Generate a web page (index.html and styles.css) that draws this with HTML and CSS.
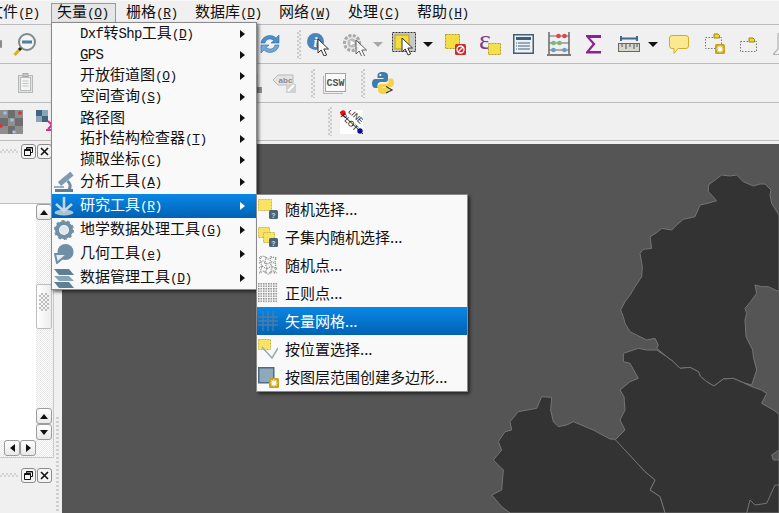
FILE: index.html
```html
<!DOCTYPE html>
<html lang="zh">
<head>
<meta charset="utf-8">
<title>QGIS</title>
<link rel="stylesheet" href="styles.css">
</head>
<body>
<svg class="defs" width="0" height="0">
  <defs>
    <path id="cur" d="M0 0V14L3.200 11 6 17 8.600 16 5.800 10H10.500Z" fill="#fff" stroke="#333" stroke-width="1"/>
    <g id="badge-q"><rect width="9" height="9" rx="1.500" fill="#4a6478"/><text x="4.500" y="7.500" class="badge-t">?</text></g>
    <g id="badge-g"><rect width="10" height="10" rx="1.500" fill="#c9a514"/><path d="M5 1.500V8.500M1.500 5H8.500M2.500 2.500 7.500 7.500M7.500 2.500 2.500 7.500" stroke="#fff" stroke-width="1.200"/></g>
  </defs>
</svg>

<header class="menubar">
  <div class="mi"><span>文件<span class="lat">(<u>P</u>)</span></span></div>
  <div class="mi active"><span>矢量<span class="lat">(<u>O</u>)</span></span></div>
  <div class="mi"><span>栅格<span class="lat">(<u>R</u>)</span></span></div>
  <div class="mi"><span>数据库<span class="lat">(<u>D</u>)</span></span></div>
  <div class="mi"><span>网络<span class="lat">(<u>W</u>)</span></span></div>
  <div class="mi"><span>处理<span class="lat">(<u>C</u>)</span></span></div>
  <div class="mi"><span>帮助<span class="lat">(<u>H</u>)</span></span></div>
</header>

<div class="toolbar">
  <svg width="2" height="8" viewBox="0 0 2 8"><rect width="2" height="8" rx="1" fill="#8a8a8a"/></svg>
  <svg class="ml11" width="23" height="23" viewBox="0 0 23 23"><circle cx="14" cy="9" r="8" fill="#f4f6f6" stroke="#7c8a8c" stroke-width="2"/><rect x="9" y="7.500" width="10" height="3" fill="#4f7da3"/><path d="M8 15 1.500 22" stroke="#d9ae22" stroke-width="3"/><path d="M8 15 6 17" stroke="#222" stroke-width="3"/></svg>
  <svg class="ml223" width="22" height="22" viewBox="0 0 22 22"><path d="M2 10C3 3 12 0 17 5L20 2V10H12L15 7.500C11 4.500 7 6 6 10Z" fill="#4b8fce" stroke="#2d6ca8" stroke-width=".6"/><path d="M20 12C19 19 10 22 5 17L2 20V12H10L7 14.500C11 17.500 15 16 16 12Z" fill="#6fa9dc" stroke="#2d6ca8" stroke-width=".6"/></svg>
  <div class="grip ml16"></div>
  <svg class="ml6" width="24" height="23" viewBox="0 0 24 23"><circle cx="8.500" cy="8.500" r="8.500" fill="#4a84bd"/><text x="8.500" y="13.500" class="info">i</text><use href="#cur" x="11" y="6"/></svg>
  <svg class="ml11" width="25" height="23" viewBox="0 0 25 23"><circle cx="10" cy="10" r="7.500" fill="#e8e8e8" stroke="#a8a8a8" stroke-width="3" stroke-dasharray="3 1.500"/><circle cx="10" cy="10" r="4.500" fill="#bcbcbc"/><path d="M8.500 7.500 13 10 8.500 12.500Z" fill="#fff"/><use href="#cur" x="14" y="7" opacity=".75"/></svg>
  <svg class="ml6" width="10" height="5" viewBox="0 0 10 5"><path d="M0 0H10L5 5Z" fill="#a8a8a8"/></svg>
  <svg class="ml9" width="25" height="24" viewBox="0 0 25 24"><rect x=".500" y=".500" width="23" height="19" fill="#c9c9c9" stroke="#333" stroke-dasharray="2 1"/><rect x="3" y="3" width="14" height="14" fill="#f2dc3e" stroke="#b59f20"/><use href="#cur" x="10" y="6"/></svg>
  <svg class="ml6" width="10" height="5" viewBox="0 0 10 5"><path d="M0 0H10L5 5Z" fill="#111"/></svg>
  <svg class="ml12" width="22" height="21" viewBox="0 0 22 21"><rect x=".500" y=".500" width="14" height="14" fill="#f4dc45" stroke="#b39a20" stroke-dasharray="2 1"/><rect x="10" y="10" width="11" height="11" rx="1.500" fill="#cf2b2b"/><circle cx="15.500" cy="15.500" r="3.500" fill="none" stroke="#fff" stroke-width="1.300"/><path d="M13 18 18 13" stroke="#fff" stroke-width="1.300"/></svg>
  <svg class="ml13" width="21" height="21" viewBox="0 0 21 21"><text x="-1" y="15" class="eps">ε</text><rect x="8.500" y="9.500" width="12" height="11" fill="#f4e04a" stroke="#b59f20" stroke-dasharray="2 1"/></svg>
  <svg class="ml12" width="21" height="20" viewBox="0 0 21 20"><rect x=".750" y=".750" width="19.500" height="18.500" fill="#eef2f5" stroke="#3c607c" stroke-width="1.500"/><rect x="3" y="3" width="15" height="3" fill="#3c607c"/><path d="M5 9H17M5 12H17M5 15H17" stroke="#3c607c" stroke-width="1.200"/><path d="M3 9H4M3 12H4M3 15H4" stroke="#3c607c" stroke-width="1.200"/></svg>
  <svg class="ml13" width="24" height="24" viewBox="0 0 24 24"><path d="M2 0V22M22 0V22M0 23H24" stroke="#555" stroke-width="1.300"/><path d="M2 4H22M2 11H22M2 18H22" stroke="#666"/><circle cx="11.500" cy="4" r="2.300" fill="#d8474d"/><circle cx="17.500" cy="4" r="2.300" fill="#d8474d"/><circle cx="6.500" cy="11" r="2.300" fill="#79b97a"/><circle cx="12.500" cy="11" r="2.300" fill="#79b97a"/><circle cx="6.500" cy="18" r="2.300" fill="#6f9cc4"/><circle cx="17.500" cy="18" r="2.300" fill="#6f9cc4"/></svg>
  <svg class="ml14" width="17" height="20" viewBox="0 0 17 20"><path d="M1 1H16V4H5L10.500 10 4.500 17H16V19.500H1V18L7.500 10 1 2.500Z" fill="#8e1f94"/></svg>
  <svg class="ml16" width="22" height="16" viewBox="0 0 22 16"><path d="M3 0V5M19 0V5M3 2.500H19" stroke="#3f6a8a" stroke-width="2"/><rect x=".500" y="7.500" width="21" height="8" fill="#d8d8cc" stroke="#666"/><path d="M4 8V11M8 8V13M12 8V11M16 8V13M19 8V11" stroke="#555"/></svg>
  <svg class="ml8" width="10" height="5" viewBox="0 0 10 5"><path d="M0 0H10L5 5Z" fill="#111"/></svg>
  <svg class="ml11" width="20" height="19" viewBox="0 0 20 19"><path d="M3 .500H17Q19.500 .500 19.500 3V11Q19.500 13.500 17 13.500H9L5 18.500V13.500H3Q.500 13.500 .500 11V3Q.500 .500 3 .500Z" fill="#fbe98f" stroke="#cfae2c"/></svg>
  <svg class="ml16" width="21" height="22" viewBox="0 0 21 22"><rect x=".500" y="4.500" width="16" height="11" fill="none" stroke="#777" stroke-dasharray="1.500 1.500"/><path d="M9 5V1H13L14.500 2.500V5Z" fill="#f1d52a" stroke="#9c8510"/><use href="#badge-g" x="10" y="11"/></svg>
  <svg class="ml14" width="17" height="15" viewBox="0 0 17 15"><rect x=".500" y="4.500" width="16" height="10" fill="none" stroke="#777" stroke-dasharray="1.500 1.500"/><path d="M9 5V1H13L14.500 2.500V5Z" fill="#f1d52a" stroke="#9c8510"/></svg>
  <svg class="ml16" width="12" height="22" viewBox="0 0 12 22"><path d="M5 .500H12M5 .500V16L0 21.500H12" fill="none" stroke="#b4b4b4" stroke-width="1.200"/></svg>
</div>

<div class="toolbar">
  <svg class="ml18" width="15" height="20" viewBox="0 0 15 20"><rect x=".500" y="2.500" width="14" height="17" fill="#dfe2e2" stroke="#b5b8b8"/><rect x="2.500" y="4.500" width="10" height="13" fill="#f4f4f4" stroke="#bbb"/><rect x="5" y=".500" width="5" height="3" fill="#c4c6c6" stroke="#aaa"/><path d="M4.500 8H10.500M4.500 10.500H10.500M4.500 13H10.500" stroke="#c4c4c4"/></svg>
  <svg class="ml222" width="7" height="19" viewBox="0 0 7 19"><rect y="13" width="7" height="6" fill="#8e8e8e"/><path d="M0 0H3V13H0Z" fill="#d8d8d8"/></svg>
  <svg class="ml11" width="24" height="19" viewBox="0 0 24 19"><path d="M5 1H20V11H5L0 6Z" fill="#e4e4e4" stroke="#b8b8b8"/><text x="12.500" y="9" class="abc">abc</text><rect x="13" y="10" width="10" height="9" fill="#d2d2d2"/><path d="M15 17 21 11" stroke="#fff" stroke-width="2"/></svg>
  <div class="grip ml14"></div>
  <svg class="ml8" width="23" height="21" viewBox="0 0 23 21"><path d="M.500 3V20.500H20" fill="none" stroke="#b8b8b8"/><rect x="2.500" y=".500" width="20" height="18" fill="#fafafa" stroke="#a4a4a4"/><text x="12.500" y="13" class="csw">CSW</text></svg>
  <div class="grip ml15"></div>
  <svg class="ml7" width="22" height="22" viewBox="0 0 22 22"><path d="M11 0C6 0 5.500 2 5.500 3.500V6H11.500V7H3.500C1 7 0 9 0 11.500S1 16 3.500 16H5.500V13C5.500 11.500 7 10 8.500 10H13.500C15 10 16 9 16 7.500V3.500C16 1.500 14 0 11 0Z" fill="#3f7cae"/><path d="M16.500 6.500V9.500C16.500 11 15 12 13.500 12H8.500C7 12 6 13 6 14.500V18.500C6 20.500 8 22 11 22S16.500 20.500 16.500 18.500V16H10.500V15H18.500C21 15 22 13 22 10.500S21 6.500 18.500 6.500Z" fill="#f4d34a"/><circle cx="8.300" cy="3" r="1.100" fill="#fff"/><path d="M14 14.500 20 18 14 21" fill="none" stroke="#333" stroke-width="1.200"/></svg>
</div>

<div class="toolbar toolbar-last">
  <svg width="23" height="24" viewBox="0 0 23 24"><rect width="23" height="24" fill="#8e8e8e"/><path d="M0 8H8V16H0ZM8 0H15V8H8ZM15 8H23V16H15ZM8 16H15V24H8Z" fill="#6e6e6e"/><circle cx="5" cy="3" r="1.800" fill="#9ec1e8"/><circle cx="20" cy="3" r="1.800" fill="#d93030"/><circle cx="12" cy="10" r="1.800" fill="#9ec1e8"/><circle cx="1" cy="16" r="1.800" fill="#d93030"/><circle cx="14" cy="22" r="1.800" fill="#9ec1e8"/></svg>
  <svg class="ml13" width="16" height="23" viewBox="0 0 16 23"><path d="M0 0H6V6H0ZM6 6H12V12H6Z" fill="#3f6480"/><path d="M6 0H12V6H6ZM0 6H6V12H0Z" fill="#8aa5ba"/><path d="M12 11 16 15 12 19M16 20H10" fill="none" stroke="#d1338b" stroke-width="2"/></svg>
  <div class="grip ml280"></div>
  <svg class="ml8" width="23" height="24" viewBox="0 0 23 24"><rect width="23" height="24" fill="#fff"/><path d="M0 2 23 24" stroke="#222"/><circle cx="3" cy="3" r="2.700" fill="#ee0d0d"/><circle cx="20" cy="21" r="2.700" fill="#0a0a8c"/><text transform="translate(14 8) rotate(45)" class="lp">LINE</text><text transform="translate(7.500 14) rotate(45)" class="lp">PLOT</text></svg>
</div>
<div class="toolbar-gap"></div>

<main class="main">
  <aside class="dock">
    <div class="dock-col">
      <div class="dock-title">
        <i class="title-grip"></i>
        <button class="dbtn"><svg width="9" height="9" viewBox="0 0 9 9"><path d="M2.500 2.500V.500H8.500V5.500H6.500M.500 2.500H6.500V8.500H.500Z" fill="none" stroke="#111"/><path d="M.500 3.500H6.500M2.500 1H8.500" stroke="#111"/></svg></button>
        <button class="dbtn"><svg width="9" height="9" viewBox="0 0 9 9"><path d="M1 1 8 8M8 1 1 8" stroke="#111" stroke-width="1.600"/></svg></button>
      </div>
      <div class="dock-body">
        <div class="tree-row">
          <div class="tree"></div>
          <div class="vbar">
            <button class="sbtn"><i class="tri up"></i></button>
            <div class="track track-top"></div>
            <div class="thumb"><i class="thumb-dots"></i></div>
            <div class="track"></div>
            <button class="sbtn"><i class="tri up"></i></button>
            <button class="sbtn"><i class="tri down"></i></button>
          </div>
        </div>
        <div class="hbar">
          <button class="hbtn"><i class="tri left"></i></button>
          <button class="hbtn"><i class="tri right"></i></button>
        </div>
      </div>
      <div class="dock-title dock-title-2">
        <i class="title-grip"></i>
        <button class="dbtn"><svg width="9" height="9" viewBox="0 0 9 9"><path d="M2.500 2.500V.500H8.500V5.500H6.500M.500 2.500H6.500V8.500H.500Z" fill="none" stroke="#111"/><path d="M.500 3.500H6.500M2.500 1H8.500" stroke="#111"/></svg></button>
        <button class="dbtn"><svg width="9" height="9" viewBox="0 0 9 9"><path d="M1 1 8 8M8 1 1 8" stroke="#111" stroke-width="1.600"/></svg></button>
      </div>
    </div>
    <div class="splitter"><i class="split-dots"></i></div>
  </aside>
  <section class="canvas">
    <svg class="map" width="717" height="369" viewBox="-1194 -48 2151 1107">
      <g class="region">
        <path d="M785 45 810 48 830 45 850 65 880 78 900 72 915 72 933 90 930 105 935 130 957 165V395L925 380 905 380 885 375 890 400 872 425 855 445 860 460 855 480 858 530 878 570 880 590 890 630 875 675 850 668 820 655 790 657 762 678 740 665 722 650 715 635 690 622 660 625 640 605 620 590 590 565 595 555 585 535 560 540 530 525 510 515 495 490 490 470 482 450 495 425 510 405 525 380 545 350 547 320 540 280 550 268 575 265 570 230 590 218 605 205 635 210 650 195 670 178 705 170 720 135 750 128 770 122 745 95 745 75 765 60Z"/>
        <path d="M490 580 535 565 560 570 590 570 620 590 640 605 660 625 690 622 715 635 722 650 740 665 762 678 790 657 820 655 850 668 875 680 905 690 920 700 905 730 940 750 957 762V1059H615L600 1010 570 990 585 960 555 935 465 840 495 810 480 780 495 750 492 710 480 690 510 665 535 655 510 610 490 605Z"/>
        <path d="M245 710 275 712 272 750 280 785 295 800 320 795 340 785 400 810 450 837 465 838 555 935 585 960 570 990 600 1010 615 1059H150L125 1040 95 1005 125 990 130 930 100 900 125 870 115 845 135 815 155 810 150 785 175 755 230 745Z"/>
        <path d="M935 885 957 870V900L940 900Z" class="hole"/>
        <path d="M957 975H945L920 1030 885 1035 870 1020 860 1059" class="line"/>
      </g>
    </svg>
  </section>
</main>

<nav class="menu">
  <div class="row"><span class="slot"></span><span class="lbl"><span class="lat2">Dxf</span>转<span class="lat2">Shp</span>工具<span class="lat">(<u>D</u>)</span></span><i class="arrow"></i></div>
  <div class="row"><span class="slot"></span><span class="lbl"><span class="lat2"><u>G</u>PS</span></span><i class="arrow"></i></div>
  <div class="row"><span class="slot"></span><span class="lbl">开放街道图<span class="lat">(<u>O</u>)</span></span><i class="arrow"></i></div>
  <div class="row"><span class="slot"></span><span class="lbl">空间查询<span class="lat">(<u>S</u>)</span></span><i class="arrow"></i></div>
  <div class="row"><span class="slot"></span><span class="lbl">路径图</span><i class="arrow"></i></div>
  <div class="row"><span class="slot"></span><span class="lbl">拓扑结构检查器<span class="lat">(<u>T</u>)</span></span><i class="arrow"></i></div>
  <div class="row"><span class="slot"></span><span class="lbl">撷取坐标<span class="lat">(<u>C</u>)</span></span><i class="arrow"></i></div>
  <div class="row tall"><span class="slot"><svg width="20" height="20" viewBox="0 0 20 20"><path d="M18 1.500 5.500 12" stroke="#7f9bb0" stroke-width="5"/><path d="M13.500 9Q18 13 15 17.500" fill="none" stroke="#6f8fa6" stroke-width="3"/><rect x="1" y="17" width="18" height="3" fill="#5e7d93"/><rect x="0" y="14" width="10" height="2" fill="#9ab1c2"/></svg></span><span class="lbl">分析工具<span class="lat">(<u>A</u>)</span></span><i class="arrow"></i></div>
  <div class="row tall sel"><span class="slot"><svg width="20" height="20" viewBox="0 0 20 20"><ellipse cx="10" cy="16.500" rx="9.500" ry="3" fill="#a9c3d6"/><path d="M10 1V14M2 8 10 15 18 8" fill="none" stroke="#c3d6e4" stroke-width="2.600"/></svg></span><span class="lbl">研究工具<span class="lat">(<u>R</u>)</span></span><i class="arrow"></i></div>
  <div class="row tall"><span class="slot"><svg width="20" height="20" viewBox="0 0 20 20"><circle cx="10" cy="10" r="7" fill="none" stroke="#6f8fa6" stroke-width="4"/><circle cx="10" cy="10" r="9" fill="none" stroke="#6f8fa6" stroke-width="2" stroke-dasharray="3 2.650"/><circle cx="10" cy="10" r="4.200" fill="#dfe7ed"/></svg></span><span class="lbl">地学数据处理工具<span class="lat">(<u>G</u>)</span></span><i class="arrow"></i></div>
  <div class="row tall"><span class="slot"><svg width="20" height="20" viewBox="0 0 20 20"><circle cx="11.500" cy="8" r="8" fill="#6f8fa6"/><path d="M1 10H13.500L3 19Z" fill="#e6edf2" stroke="#6f8fa6" stroke-width="2" stroke-linejoin="round"/></svg></span><span class="lbl">几何工具<span class="lat">(<u>e</u>)</span></span><i class="arrow"></i></div>
  <div class="row tall"><span class="slot"><svg width="20" height="20" viewBox="0 0 20 20"><path d="M0 1H15L20 7H5Z" fill="#5f7f96"/><path d="M0 8H15L20 13H5Z" fill="#88a4b8"/><path d="M0 14H15L20 20H5Z" fill="#5f7f96"/></svg></span><span class="lbl">数据管理工具<span class="lat">(<u>D</u>)</span></span><i class="arrow"></i></div>
</nav>

<nav class="submenu">
  <div class="srow"><span class="sslot"><svg width="20" height="20" viewBox="0 0 20 20"><rect x=".500" y=".500" width="13" height="11" fill="#f8e363" stroke="#c9b64a" stroke-dasharray="2 1"/><use href="#badge-q" x="11" y="11"/></svg></span>随机选择...</div>
  <div class="srow"><span class="sslot"><svg width="20" height="20" viewBox="0 0 20 20"><rect x=".500" y=".500" width="11" height="10" fill="#f8e363" stroke="#c9b64a" stroke-dasharray="2 1"/><rect x="5.500" y="5.500" width="11" height="10" fill="#f8e363" stroke="#c9b64a" stroke-dasharray="2 1"/><use href="#badge-q" x="11" y="11"/></svg></span>子集内随机选择...</div>
  <div class="srow"><span class="sslot"><svg width="20" height="20" viewBox="0 0 20 20"><path d="M1 3 6 1 10 4 15 2 19 4M1 8 5 6 9 9 14 7 19 9M1 13 4 11 9 14 13 11 19 14M1 18 6 16 10 19 15 16 19 18M3 1 2 6 4 11 2 18M8 2 7 8 9 13 7 19M13 1 12 7 14 12 12 19M18 2 17 7 18 13 16 19" fill="none" stroke="#8b8b8b" stroke-width="1.300" stroke-dasharray="1 1"/></svg></span>随机点...</div>
  <div class="srow"><span class="sslot"><svg width="20" height="20" viewBox="0 0 20 20"><defs><pattern id="dots" width="2.500" height="2.500" patternUnits="userSpaceOnUse"><rect width="1.500" height="1.500" fill="#8a8a8a"/></pattern></defs><rect width="20" height="20" fill="url(#dots)"/></svg></span>正则点...</div>
  <div class="srow sel"><span class="sslot"><svg width="20" height="20" viewBox="0 0 20 20"><path d="M0 6H20M0 10H20M0 14H20M5 0V20M10 0V20M15 0V20" stroke="#4d7ea8" stroke-width="1.300"/></svg></span>矢量网格...</div>
  <div class="srow"><span class="sslot"><svg width="20" height="20" viewBox="0 0 20 20"><rect x=".500" y=".500" width="12" height="10" fill="#f8e363" stroke="#c9b64a" stroke-dasharray="2 1"/><path d="M4 8 14 19 20 9" fill="none" stroke="#99aab5" stroke-width="1.500"/></svg></span>按位置选择...</div>
  <div class="srow"><span class="sslot"><svg width="21" height="21" viewBox="0 0 21 21"><rect x=".750" y=".750" width="15" height="15" fill="#8ea9be" stroke="#4f6b80" stroke-width="1.500"/><use href="#badge-g" x="11" y="11"/></svg></span>按图层范围创建多边形...</div>
</nav>
</body>
</html>
```

FILE: styles.css
```css
* { box-sizing: border-box; }
html, body { margin: 0; padding: 0; }
body {
  position: relative;
  width: 779px;
  height: 513px;
  overflow: hidden;
  background: #f0f0f0;
  color: #111;
  font: 15px/20px "Noto Sans CJK SC", "Liberation Sans", sans-serif;
}
svg { display: block; flex: none; }
.defs { position: absolute; }
u { text-decoration: underline; text-underline-offset: 1px; }
.lat, .lat2 { font-family: "Liberation Mono", monospace; font-size: 13px; letter-spacing: -.6px; }
.lat2 { font-size: 14px; letter-spacing: -.6px; }

/* menu bar */
.menubar {
  display: flex;
  gap: 4px;
  height: 25px;
  padding: 3px 0 2px;
  margin-left: -18px;
  border-top: 1px solid #f8f8f8;
  position: relative;
}
.menubar::after { content: ""; position: absolute; left: 0; right: 0; bottom: 0; height: 1px; background: #bdbdbd; }
.mi { flex: none; margin: -1px 0 0; padding: 0 6.400px 2px 5px; border: 1px solid transparent; line-height: 17px; display: flex; align-items: center; }
.mi.active { background: #e6e6e6; border-color: #9a9a9a; }

/* toolbars */
.toolbar { display: flex; align-items: center; height: 39px; border-bottom: 1px solid #bdbdbd; }
.toolbar-last { height: 38px; }
.toolbar-gap { height: 3px; }
.grip { width: 4px; height: 29px; flex: none; background: repeating-conic-gradient(#cacaca 0 25%, transparent 0 50%) 0 0 / 4px 4px; }
.ml6 { margin-left: 6px; } .ml7 { margin-left: 7px; } .ml8 { margin-left: 8px; } .ml9 { margin-left: 9px; }
.ml11 { margin-left: 11px; } .ml12 { margin-left: 12px; } .ml13 { margin-left: 13px; } .ml14 { margin-left: 14px; }
.ml15 { margin-left: 15px; } .ml16 { margin-left: 16px; } .ml18 { margin-left: 18px; }
.ml222 { margin-left: 222px; } .ml223 { margin-left: 223px; } .ml280 { margin-left: 276px; }

.info { font: italic bold 14px "Liberation Serif", serif; fill: #fff; text-anchor: middle; }
.eps { font: 28px "Liberation Serif", serif; fill: #7b3f8f; }
.abc { font: bold 8px "Liberation Sans", sans-serif; fill: #8a8a8a; text-anchor: middle; }
.csw { font: bold 10px "Liberation Mono", monospace; fill: #555; text-anchor: middle; }
.lp { font: 8px "Liberation Sans", sans-serif; fill: #111; text-anchor: middle; }
.badge-t { font: bold 7px "Liberation Sans", sans-serif; fill: #cfe0ec; text-anchor: middle; }

/* main */
.main { display: flex; height: 369px; }
.dock { display: flex; width: 62px; flex: none; background: #f0f0f0; }
.dock-col { width: 53px; flex: none; }
.dock-title { display: flex; justify-content: flex-end; gap: 1px; height: 59px; padding-right: 1px; align-items: flex-start; }
.dock-title-2 { height: 15px; margin-top: 10px; }
.title-grip { flex: 1; height: 4px; margin: 5px 2px 0 0; background: repeating-conic-gradient(#d4d4d4 0 25%, transparent 0 50%) 0 0 / 4px 4px; }
.dbtn { width: 15px; height: 15px; flex: none; padding: 0; display: flex; align-items: center; justify-content: center; background: #f4f4f4; border: 1px solid #8c8c8c; border-radius: 3px; }
.dock-body { height: 255px; border-bottom: 1px solid #c8c8c8; border-right: 1px solid #c8c8c8; width: 54px; display: flex; flex-direction: column; border-top: 1px solid #bdbdbd; }
.tree-row { flex: 1; display: flex; min-height: 0; }
.tree { flex: 1; background: #fff; }
.vbar { width: 16px; flex: none; display: flex; flex-direction: column; margin-right: 1px; }
.track { flex: 1; background: repeating-conic-gradient(#e6e6e6 0 25%, #fff 0 50%) 0 0 / 2px 2px; }
.track-top { flex: none; height: 64px; }
.thumb { height: 45px; flex: none; background: linear-gradient(90deg, #fff, #ececec); border: 1px solid #bdbdbd; border-radius: 2px; padding: 8px 2px; }
.thumb-dots { display: block; height: 18px; background: repeating-conic-gradient(#bcbcbc 0 25%, transparent 0 50%) 0 0 / 4px 4px; }
.sbtn { height: 16px; flex: none; width: 16px; padding: 0; display: flex; align-items: center; justify-content: center; background: linear-gradient(#fff, #e8e8e8); border: 1px solid #9c9c9c; border-radius: 3px; }
.hbar { display: flex; height: 17px; flex: none; padding-left: 4px; background: repeating-conic-gradient(#e8e8e8 0 25%, #fff 0 50%) 0 0 / 2px 2px; }
.hbtn { width: 16px; height: 16px; padding: 0; display: flex; align-items: center; justify-content: center; background: linear-gradient(#fff, #e8e8e8); border: 1px solid #9c9c9c; border-radius: 3px; }
.tri { display: block; width: 0; height: 0; border: 4px solid transparent; }
.tri.up { border-bottom: 5px solid #111; border-top: 0; }
.tri.down { border-top: 5px solid #111; border-bottom: 0; }
.tri.left { border-right: 5px solid #111; border-left: 0; }
.tri.right { border-left: 5px solid #111; border-right: 0; }
.splitter { flex: 1; padding: 273px 3px 0; }
.split-dots { display: block; width: 3px; height: 96px; background: repeating-linear-gradient(#cfcfcf 0 2px, transparent 2px 4px); }
.canvas { flex: 1; background: #555; overflow: hidden; }
.region path { fill: #333; stroke: #757575; stroke-width: 3; stroke-linejoin: round; }
.region path.hole { fill: #555; }
.region path.line { fill: none; }

/* dropdown */
.menu {
  position: absolute;
  left: 51px;
  top: 22px;
  width: 206px;
  height: 268px;
  padding: 0;
  background: #f9f9f9;
  border: 1px solid #8a8a8a;
  box-shadow: 2px 2px 3px rgba(0, 0, 0, .55);
}
.row { display: flex; align-items: center; height: 21px; line-height: 21px; padding-right: 11px; }
.row.tall { height: 24px; }
.slot { width: 28px; flex: none; display: flex; justify-content: flex-start; padding-left: 2px; }
.lbl { white-space: nowrap; padding-bottom: 2px; }
.arrow { margin-left: auto; width: 0; height: 0; border: 4px solid transparent; border-left: 5px solid #111; border-right: 0; }
.sel { background: linear-gradient(#0a87e6, #0062b4); color: #fff; }
.sel .arrow { border-left-color: #fff; }

/* submenu */
.submenu {
  position: absolute;
  left: 256px;
  top: 194px;
  width: 212px;
  height: 198px;
  background: #f9f9f9;
  border: 1px solid #8a8a8a;
  box-shadow: 2px 2px 3px rgba(0, 0, 0, .55);
}
.srow { display: flex; align-items: center; height: 28px; white-space: nowrap; }
.sslot { width: 28px; flex: none; padding-left: 1px; }
```
